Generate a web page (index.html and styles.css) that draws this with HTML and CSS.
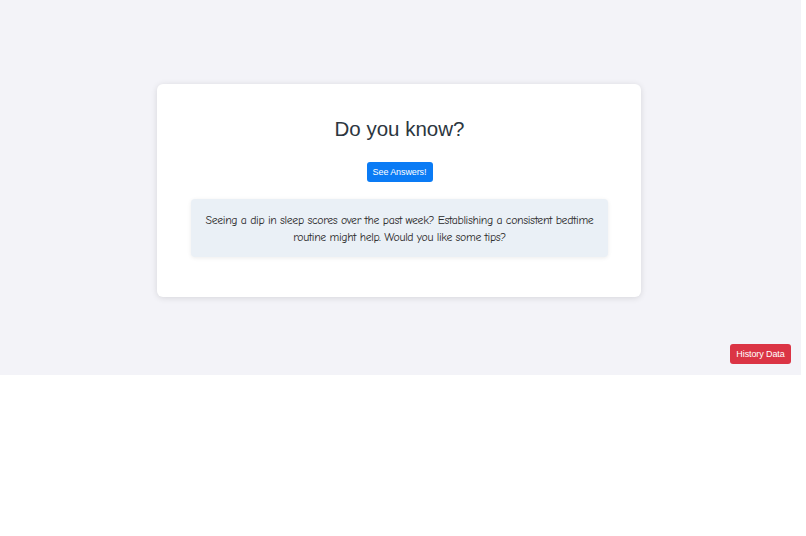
FILE: index.html
```html
<!DOCTYPE html>
<html lang="en">
<head>
    <meta charset="UTF-8">
    <meta name="viewport" content="width=device-width, initial-scale=1.0">
    <title>Do you know?</title>
    <link rel="stylesheet" href="styles.css">
</head>
<body>
    <div class="page">
        <div class="card">
            <h2 class="card-title">Do you know?</h2>
            <button class="btn btn-blue" type="button">See Answers!</button>
            <div class="tip">
                <p>Seeing a dip in sleep scores over the past week? Establishing a consistent bedtime routine might help. Would you like some tips?</p>
            </div>
        </div>
        <div class="footer">
            <button class="btn btn-red" type="button">History Data</button>
        </div>
    </div>
</body>
</html>
```

FILE: styles.css
```css
* {
    box-sizing: border-box;
    margin: 0;
    padding: 0;
}

body {
    font-family: 'Helvetica Neue', 'Liberation Sans', Arial, sans-serif;
    background: #fff;
}

.page {
    width: 801px;
    height: 375px;
    background: #f3f3f8;
    display: flex;
    flex-direction: column;
    padding: 84px 10px 11px;
}

.card {
    width: 484px;
    height: 213px;
    margin-left: 147px;
    background: #fff;
    border-radius: 6px;
    box-shadow: 0 1px 6px rgba(0, 0, 0, 0.12);
    padding: 31px 33px 0 34px;
    text-align: center;
}

.card-title {
    font-size: 20.5px;
    font-weight: 400;
    color: #2c3640;
    line-height: 28px;
    margin-bottom: 18px;
}

.btn {
    border: none;
    border-radius: 3px;
    color: #fff;
    font-family: 'Liberation Sans', Arial, sans-serif;
    font-size: 9px;
    letter-spacing: -0.1px;
    cursor: pointer;
}

.btn-blue {
    background: #0a7bf5;
    width: 66px;
    height: 20px;
}

.tip {
    margin-top: 17px;
    background: #eaf0f6;
    border-radius: 4px;
    box-shadow: 0 1px 4px rgba(0, 0, 0, 0.08);
    height: 58px;
    padding: 13px 4px 0;
}

.tip p {
    font-family: 'Comic Neue', 'Comic Sans MS', cursive;
    font-size: 11.8px;
    letter-spacing: -0.35px;
    line-height: 17px;
    color: #2a2a2a;
}

.footer {
    margin-top: auto;
    display: flex;
    justify-content: flex-end;
}

.btn-red {
    background: #db3445;
    width: 61px;
    height: 20px;
}
```
